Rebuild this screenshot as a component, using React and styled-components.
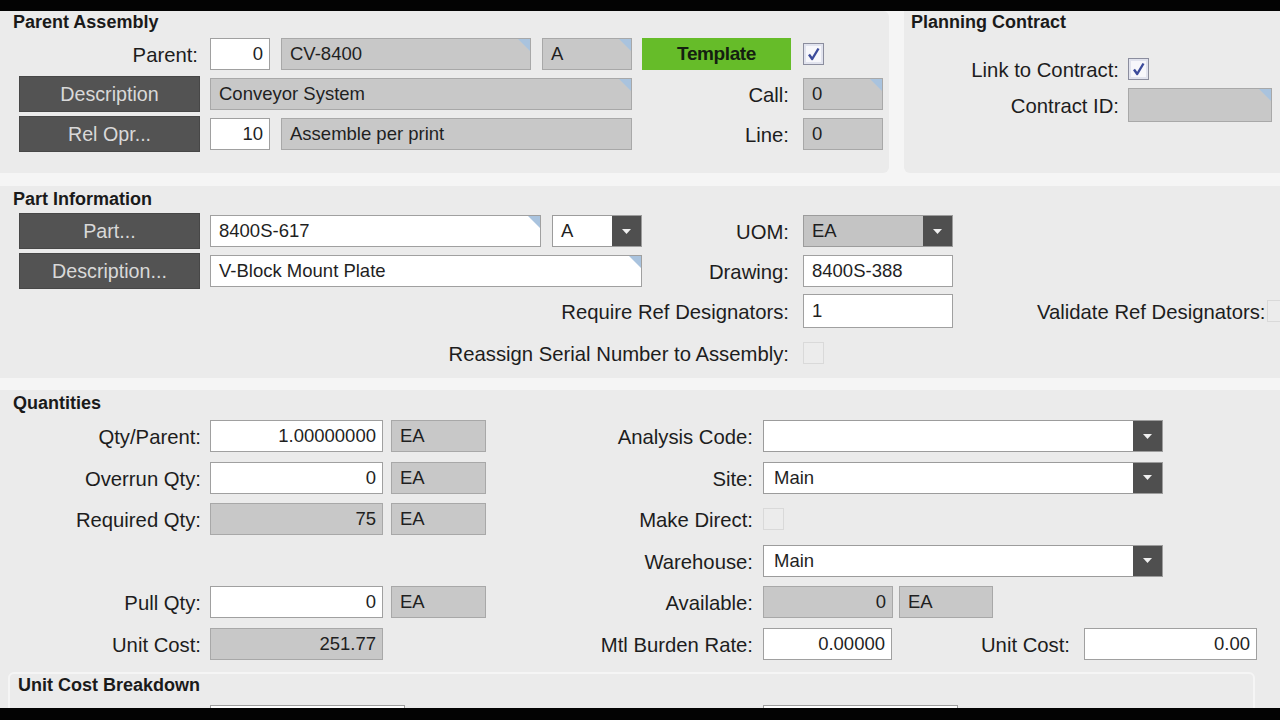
import React from 'react';
import styled, { createGlobalStyle } from 'styled-components';

const GlobalStyle = createGlobalStyle`
  html, body {
    margin: 0;
    padding: 0;
    background: #000;
  }
  body {
    font-family: "Liberation Sans", Arial, Helvetica, sans-serif;
    color: #1d1d1d;
  }
  * {
    box-sizing: border-box;
  }
`;

const Screen = styled.div`
  width: 1280px;
  height: 720px;
  display: flex;
  flex-direction: column;
  overflow: hidden;
  background: #000;
`;

const Letterbox = styled.div`
  flex: none;
  height: ${p => p.$h}px;
  background: #030303;
`;

const Canvas = styled.main`
  flex: 1;
  min-height: 0;
  overflow: hidden;
  display: flex;
  flex-direction: column;
  background: #f5f5f5;
`;

const TopRow = styled.div`
  flex: none;
  display: flex;
  gap: 15px;
  height: 162px;
`;

const Panel = styled.section`
  flex: ${p => (p.$grow ? '1 1 auto' : 'none')};
  width: ${p => (p.$w ? `${p.$w}px` : 'auto')};
  height: ${p => (p.$h ? `${p.$h}px` : 'auto')};
  min-width: 0;
  margin-top: ${p => p.$mt || 0}px;
  padding: ${p => p.$pad || '2px 0 0 0'};
  background: #ebebeb;
  border-radius: ${p => p.$radius || '0'};
`;

const SubPanel = styled.section`
  width: 1247px;
  margin: 8px 0 0 8px;
  padding-left: 8px;
  border: 2px solid #f5f5f5;
  border-radius: 6px;
  background: #ebebeb;
`;

const PanelTitle = styled.h2`
  margin: 0;
  padding-left: ${p => p.$pl ?? 13}px;
  font-size: 18px;
  line-height: 22px;
  font-weight: bold;
  color: #1a1a1a;
  white-space: nowrap;
`;

const FormGrid = styled.div`
  display: grid;
  grid-template-columns: ${p => p.$cols};
  grid-template-rows: ${p => p.$rows || 'none'};
  grid-auto-rows: ${p => p.$autoRow || 36}px;
  row-gap: ${p => p.$rowGap ?? 4}px;
  align-items: center;
  padding-left: ${p => p.$pl || 0}px;
  margin-top: ${p => p.$mt || 0}px;
`;

const Label = styled.span`
  grid-column: ${p => p.$span || 'auto'};
  justify-self: stretch;
  flex: none;
  width: ${p => (p.$w ? `${p.$w}px` : 'auto')};
  padding-top: 3px;
  padding-right: ${p => p.$pr ?? 14}px;
  text-align: right;
  font-size: 20.3px;
  color: #1d1d1d;
  white-space: nowrap;
`;

const Inline = styled.div`
  grid-column: ${p => p.$span || 'auto'};
  display: flex;
  align-items: center;
  gap: ${p => p.$gap ?? 11}px;
  padding-left: ${p => p.$pl || 0}px;
  min-width: 0;
  white-space: nowrap;
`;

const Field = styled.div`
  position: relative;
  grid-column: ${p => p.$col || 'auto'};
  justify-self: ${p => p.$justify || 'start'};
  flex: none;
  width: ${p => p.$w}px;
  height: ${p => p.$h || 32}px;
  display: flex;
  align-items: center;
  justify-content: ${p => (p.$right ? 'flex-end' : 'flex-start')};
  padding: 0 ${p => p.$pr ?? 6}px 0 ${p => p.$pl ?? 8}px;
  background: ${p => (p.$grey ? '#c8c8c8' : '#ffffff')};
  border: 1px solid ${p => (p.$grey ? '#a8a8a8' : '#a0a0a0')};
  font-size: 18.5px;
  color: #1f1f1f;
  white-space: nowrap;
  overflow: hidden;

  &::after {
    content: ${p => (p.$corner ? "''" : 'none')};
    position: absolute;
    top: 0;
    right: 0;
    width: 0;
    height: 0;
    border-top: 12px solid #a9c3de;
    border-left: 12px solid transparent;
  }
`;

const Combo = styled.div`
  flex: none;
  justify-self: start;
  display: flex;
  width: ${p => p.$w}px;
  height: 32px;
  border: 1px solid #9c9c9c;
  background: ${p => (p.$grey ? '#c4c4c4' : '#ffffff')};
`;

const ComboText = styled.span`
  flex: 1;
  display: flex;
  align-items: center;
  padding-left: ${p => p.$pl ?? 8}px;
  font-size: 18.5px;
  color: #1f1f1f;
`;

const ComboArrow = styled.span`
  flex: none;
  width: 29px;
  display: flex;
  align-items: center;
  justify-content: center;
  background: #4f4f4f;
`;

const DarkButton = styled.button`
  width: 181px;
  height: 36px;
  padding: 0;
  display: flex;
  align-items: center;
  justify-content: center;
  border: 1px solid #474747;
  background: #535353;
  color: #d9d9d9;
  font-family: inherit;
  font-size: 19.7px;
  cursor: pointer;
`;

const TemplateButton = styled.button`
  width: 149px;
  height: 32px;
  padding: 0;
  border: 0;
  background: #66bc29;
  color: #142010;
  font-family: inherit;
  font-size: 19px;
  font-weight: bold;
  letter-spacing: -0.4px;
  cursor: pointer;
`;

const Box = styled.span`
  justify-self: start;
  flex: none;
  display: inline-flex;
  align-items: center;
  justify-content: center;
  width: 21px;
  height: 22px;
  border: 1px solid ${p => (p.$disabled ? '#d9d9d9' : '#8b8d9e')};
  background: ${p => (p.$disabled ? '#ececec' : '#f7f7fb')};
  box-shadow: ${p => (p.$disabled ? 'none' : 'inset 0 0 0 2px #e1e3ee')};
`;

const Arrow = () => (
  <svg width="9" height="5" viewBox="0 0 9 5">
    <path d="M0 0h9L4.5 5z" fill="#f0f0f0" />
  </svg>
);

const CheckBox = ({ checked, disabled }) => (
  <Box $disabled={disabled}>
    {checked && (
      <svg width="13" height="14" viewBox="0 0 13 14">
        <path d="M2 7.5 L5.2 12 L11.5 1.5" fill="none" stroke="#3c4b9b" strokeWidth="2.4" strokeLinejoin="round" />
      </svg>
    )}
  </Box>
);

const Dropdown = ({ w, value, grey, pl }) => (
  <Combo $w={w} $grey={grey}>
    <ComboText $pl={pl}>{value}</ComboText>
    <ComboArrow>
      <Arrow />
    </ComboArrow>
  </Combo>
);

const ParentAssembly = () => (
  <Panel $w={889} $h={162} $pad="0" $radius="0 6px 6px 0">
    <PanelTitle>Parent Assembly</PanelTitle>
    <FormGrid $cols="191px 432px 161px 79px" $pl={19} $mt={3}>
      <Label $pr={12}>Parent:</Label>
      <Inline>
        <Field $w={60} $right>0</Field>
        <Field $w={250} $grey $corner>CV-8400</Field>
        <Field $w={90} $grey $corner>A</Field>
      </Inline>
      <TemplateButton>Template</TemplateButton>
      <CheckBox checked />

      <DarkButton>Description</DarkButton>
      <Field $w={422} $grey $corner>Conveyor System</Field>
      <Label>Call:</Label>
      <Field $w={80} $grey $corner>0</Field>

      <DarkButton>Rel Opr...</DarkButton>
      <Inline>
        <Field $w={60} $right>10</Field>
        <Field $w={351} $grey>Assemble per print</Field>
      </Inline>
      <Label>Line:</Label>
      <Field $w={80} $grey>0</Field>
    </FormGrid>
  </Panel>
);

const PlanningContract = () => (
  <Panel $grow $h={162} $pad="0 0 0 7px" $radius="0 0 0 6px">
    <PanelTitle $pl={0}>Planning Contract</PanelTitle>
    <FormGrid $cols="217px 150px" $rowGap={0} $mt={18}>
      <Label $pr={9}>Link to Contract:</Label>
      <CheckBox checked />
      <Label $pr={9}>Contract ID:</Label>
      <Field $w={144} $h={34} $grey $corner />
    </FormGrid>
  </Panel>
);

const PartInformation = () => (
  <Panel $h={192} $mt={13}>
    <PanelTitle>Part Information</PanelTitle>
    <FormGrid $cols="191px 432px 161px 150px 1fr" $rows="36px 36px 36px 40px" $pl={19} $mt={3}>
      <DarkButton>Part...</DarkButton>
      <Inline>
        <Field $w={331} $corner>8400S-617</Field>
        <Dropdown w={90} value="A" />
      </Inline>
      <Label>UOM:</Label>
      <Dropdown w={150} value="EA" grey />
      <span />

      <DarkButton>Description...</DarkButton>
      <Field $w={432} $corner>V-Block Mount Plate</Field>
      <Label>Drawing:</Label>
      <Field $w={150}>8400S-388</Field>
      <span />

      <Label $span="1 / 4">Require Ref Designators:</Label>
      <Field $w={150} $h={34}>1</Field>
      <Inline $pl={84} $gap={2}>
        <Label $pr={0}>Validate Ref Designators:</Label>
        <CheckBox disabled />
      </Inline>

      <Label $span="1 / 4">Reassign Serial Number to Assembly:</Label>
      <CheckBox disabled />
    </FormGrid>
  </Panel>
);

const Quantities = () => (
  <Panel $grow $mt={12}>
    <PanelTitle>Quantities</PanelTitle>
    <FormGrid
      $cols="210px 173px 103px 277px 1fr"
      $rows="42px 41px 42px 41px 42px 41px"
      $rowGap={0}
      $mt={1}
    >
      <Label $pr={9}>Qty/Parent:</Label>
      <Field $w={173} $right>1.00000000</Field>
      <Field $w={95} $grey $justify="end">EA</Field>
      <Label $pr={10}>Analysis Code:</Label>
      <Dropdown w={400} value="" />

      <Label $pr={9}>Overrun Qty:</Label>
      <Field $w={173} $right>0</Field>
      <Field $w={95} $grey $justify="end">EA</Field>
      <Label $pr={10}>Site:</Label>
      <Dropdown w={400} value="Main" pl={10} />

      <Label $pr={9}>Required Qty:</Label>
      <Field $w={173} $grey $right>75</Field>
      <Field $w={95} $grey $justify="end">EA</Field>
      <Label $pr={10}>Make Direct:</Label>
      <CheckBox disabled />

      <Label $pr={10} $span="4">Warehouse:</Label>
      <Dropdown w={400} value="Main" pl={10} />

      <Label $pr={9}>Pull Qty:</Label>
      <Field $w={173} $right>0</Field>
      <Field $w={95} $grey $justify="end">EA</Field>
      <Label $pr={10}>Available:</Label>
      <Inline $gap={6}>
        <Field $w={130} $grey $right $pr={6}>0</Field>
        <Field $w={94} $grey>EA</Field>
      </Inline>

      <Label $pr={9}>Unit Cost:</Label>
      <Field $w={173} $grey $right>251.77</Field>
      <Label $pr={10} $span="4">Mtl Burden Rate:</Label>
      <Inline $gap={0}>
        <Field $w={129} $right>0.00000</Field>
        <Label $w={192} $pr={14}>Unit Cost:</Label>
        <Field $w={173} $right>0.00</Field>
      </Inline>
    </FormGrid>

    <SubPanel>
      <PanelTitle $pl={0}>Unit Cost Breakdown</PanelTitle>
      <FormGrid $cols="192px 195px 358px 195px" $autoRow={32} $mt={9}>
        <Field $w={195} $col="2" />
        <Field $w={195} $col="4" />
      </FormGrid>
    </SubPanel>
  </Panel>
);

export default function App() {
  return (
    <>
      <GlobalStyle />
      <Screen>
        <Letterbox $h={11} />
        <Canvas>
          <TopRow>
            <ParentAssembly />
            <PlanningContract />
          </TopRow>
          <PartInformation />
          <Quantities />
        </Canvas>
        <Letterbox $h={12} />
      </Screen>
    </>
  );
}
